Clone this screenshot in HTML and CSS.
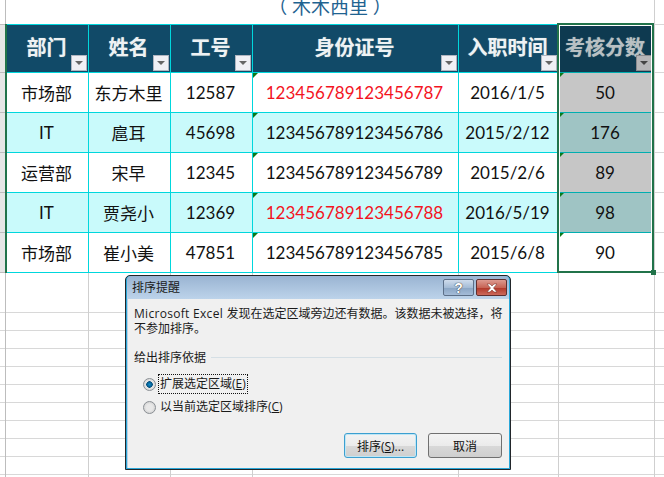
FILE: index.html
```html
<!DOCTYPE html>
<html lang="zh">
<head>
<meta charset="utf-8">
<title>排序提醒</title>
<link rel="stylesheet" href="styles.css">
</head>
<body>
<div class="sheet">
  <div class="gutter"></div>
  <div class="main">
    <div class="title">（ 木木西里 ）</div>
    <div class="table">
      <div class="cell head">部门<i class="drop"></i></div>
      <div class="cell head">姓名<i class="drop"></i></div>
      <div class="cell head">工号<i class="drop"></i></div>
      <div class="cell head">身份证号<i class="drop"></i></div>
      <div class="cell head">入职时间<i class="drop"></i></div>
      <div class="cell head sel">考核分数<i class="drop"></i></div>

      <div class="cell">市场部</div>
      <div class="cell">东方木里</div>
      <div class="cell">12587</div>
      <div class="cell tick red">123456789123456787</div>
      <div class="cell">2016/1/5</div>
      <div class="cell tick sel">50</div>

      <div class="cell alt">IT</div>
      <div class="cell alt">扈耳</div>
      <div class="cell alt">45698</div>
      <div class="cell alt tick">123456789123456786</div>
      <div class="cell alt">2015/2/12</div>
      <div class="cell alt tick sel">176</div>

      <div class="cell">运营部</div>
      <div class="cell">宋早</div>
      <div class="cell">12345</div>
      <div class="cell tick">123456789123456789</div>
      <div class="cell">2015/2/6</div>
      <div class="cell tick sel">89</div>

      <div class="cell alt">IT</div>
      <div class="cell alt">贾尧小</div>
      <div class="cell alt">12369</div>
      <div class="cell alt tick red">123456789123456788</div>
      <div class="cell alt">2016/5/19</div>
      <div class="cell alt tick sel">98</div>

      <div class="cell">市场部</div>
      <div class="cell">崔小美</div>
      <div class="cell">47851</div>
      <div class="cell tick">123456789123456785</div>
      <div class="cell">2015/6/8</div>
      <div class="cell tick last">90</div>
    </div>
  </div>
  <div class="right"></div>
  <div class="selection"><span class="handle"></span></div>

  <div class="dialog">
    <div class="titlebar">
      <span class="dlg-title">排序提醒</span>
      <span class="btn-help">?</span>
      <span class="btn-close">
        <svg width="16" height="10" viewBox="0 0 16 10"><path d="M3 1h3l2 2 2-2h3l-3.500 4 3.500 4h-3l-2-2-2 2h-3l3.500-4z" fill="#fff" stroke="#6b2a22" stroke-width=".5"/></svg>
      </span>
    </div>
    <div class="dlg-body">
      <p class="msg"><span class="latin">Microsoft Excel </span>发现在选定区域旁边还有数据。该数据未被选择，将不参加排序。</p>
      <div class="group"><span>给出排序依据</span><b class="rule"></b></div>
      <div class="radio-row first"><i class="radio on"></i><span class="focus">扩展选定区域(<u>E</u>)</span></div>
      <div class="radio-row"><i class="radio"></i><span class="plain">以当前选定区域排序(<u>C</u>)</span></div>
      <div class="actions">
        <button class="btn default">排序(<u>S</u>)...</button>
        <button class="btn">取消</button>
      </div>
    </div>
  </div>
</div>
</body>
</html>
```
FILE: styles.css
```css
html, body {
  margin: 0;
  padding: 0;
  background: #fff;
  overflow: hidden;
}
.sheet {
  position: relative;
  display: flex;
  width: 664px;
  height: 477px;
  overflow: hidden;
  font-family: Lato, "Noto Sans CJK SC", sans-serif;
  color: #111;
  background:
    linear-gradient(#fff, #fff) 0 0 / 100% 312px no-repeat,
    linear-gradient(#d8d8d8 1px, transparent 1px) 0 6px / 100% 18px;
  background-color: #fff;
}
.gutter {
  flex: none;
  width: 6px;
  background:
    linear-gradient(#21734a, #21734a) right 24px / 1px 249px no-repeat,
    linear-gradient(#bdbdbd, #bdbdbd) right 0 / 1px 100% no-repeat,
    repeating-linear-gradient(transparent 0 39px, #bdbdbd 39px 40px) 0 33px / 100% 240px no-repeat,
    linear-gradient(#bdbdbd, #bdbdbd) 0 24px / 100% 1px no-repeat,
    linear-gradient(#e6e6e6, #e6e6e6) 0 24px / 100% 249px no-repeat;
}
.main {
  flex: none;
  width: 648px;
  background:
    linear-gradient(#fff, #fff) 0 0 / 100% 24px no-repeat,
    linear-gradient(90deg, transparent 82px, #cfcfcf 82px, #cfcfcf 83px, transparent 83px) 0 0 / 100% 100% no-repeat,
    linear-gradient(90deg, transparent 164px, #cfcfcf 164px, #cfcfcf 165px, transparent 165px) 0 0 / 100% 100% no-repeat,
    linear-gradient(90deg, transparent 246px, #cfcfcf 246px, #cfcfcf 247px, transparent 247px) 0 0 / 100% 100% no-repeat,
    linear-gradient(90deg, transparent 452px, #cfcfcf 452px, #cfcfcf 453px, transparent 453px) 0 0 / 100% 100% no-repeat,
    linear-gradient(90deg, transparent 552px, #cfcfcf 552px, #cfcfcf 553px, transparent 553px) 0 0 / 100% 100% no-repeat;
  border-right: 1px solid #cfcfcf;
}
.right {
  flex: 1;
  background:
    repeating-linear-gradient(transparent 0 39px, #d8d8d8 39px 40px) 0 33px / 100% 240px no-repeat,
    linear-gradient(#d8d8d8, #d8d8d8) 0 24px / 100% 1px no-repeat;
}
.title {
  height: 24px;
  line-height: 14px;
  font-size: 19px;
  color: #1f6391;
  text-align: center;
  padding-left: 8px;
  box-sizing: border-box;
  overflow: hidden;
  width: 640px;
}
.table {
  display: grid;
  grid-template-columns: 82px 82px 82px 206px 100px 95px;
  grid-template-rows: 49px repeat(5, 40px);
  width: 648px;
  box-sizing: border-box;
  border-left: 1px solid #21734a;
  background: #fff;
  position: relative;
}
.cell {
  position: relative;
  display: flex;
  align-items: center;
  justify-content: center;
  box-sizing: border-box;
  padding-right: 2px;
  border-right: 1px solid #00d7dd;
  border-bottom: 1px solid #00d7dd;
  font-size: 17px;
  white-space: nowrap;
  background: #fff;
}
.cell.alt { background: #c9fafb; }
.red { color: #f3141f; }
.cell.head {
  background: #114a68;
  color: #eef2f4;
  font-size: 20px;
  font-weight: 700;
  border-top: 1px solid #00d7dd;
  text-shadow: 0 0 1px #8aa;
  padding-bottom: 4px;
}
.cell.sel { background: #c6c6c6; border-bottom-color: #00aeb0; }
.cell.alt.sel { background: #9fc4c4; }
.cell.head.sel {
  background: #0e3a50;
  color: #b9c0c3;
  border-top-color: transparent;
}
.tick::before {
  content: "";
  position: absolute;
  left: 0;
  top: 0;
  border-top: 5px solid #0a7a1a;
  border-right: 5px solid transparent;
}
.drop {
  position: absolute;
  right: 1px;
  bottom: 1px;
  width: 16px;
  height: 16px;
  box-sizing: border-box;
  background: #f0f0f5;
  border: 1px solid #b0b5c0;
}
.drop::after {
  content: "";
  position: absolute;
  left: 3px;
  top: 5px;
  border-top: 4px solid #666;
  border-left: 4px solid transparent;
  border-right: 4px solid transparent;
}
.head.sel .drop { background: #b6b6b8; border-color: #8a8a8e; }
.head.sel .drop::after { border-top-color: #444; }

.selection {
  position: absolute;
  left: 557px;
  top: 23px;
  width: 97px;
  height: 250px;
  box-sizing: border-box;
  border: 2px solid #21734a;
  box-shadow: inset 0 0 0 1px #fff;
}
.handle {
  position: absolute;
  right: -4px;
  bottom: -4px;
  width: 5px;
  height: 5px;
  background: #21734a;
}

.dialog {
  position: absolute;
  left: 125px;
  top: 275px;
  width: 386px;
  height: 195px;
  box-sizing: border-box;
  border: 1px solid #22262a;
  border-radius: 5px 5px 0 0;
  background: #2aa7d8;
  padding: 0 1px 1px;
  display: flex;
  flex-direction: column;
  font-family: "Open Sans", "Noto Sans CJK SC", sans-serif;
  font-size: 12px;
  color: #1a1a1a;
}
.titlebar {
  flex: none;
  height: 23px;
  display: flex;
  align-items: flex-start;
  padding: 0 2px 0 5px;
  background: linear-gradient(#9ab4d2, #bcd3ea);
  border-radius: 4px 4px 0 0;
}
.dlg-title {
  flex: 1;
  line-height: 24px;
  font-size: 12px;
}
.btn-help, .btn-close {
  height: 17px;
  box-sizing: border-box;
  margin-top: 3px;
  display: flex;
  align-items: center;
  justify-content: center;
  border-radius: 2px;
}
.btn-help {
  width: 31px;
  margin-right: 2px;
  font: 700 14px "Liberation Sans", sans-serif;
  color: #fff;
  text-shadow: 0 0 1px #333, 0 0 1px #333;
  background: linear-gradient(#cfdcec 0%, #a5bcd6 50%, #8aa5c4 52%, #a4bcd8 100%);
  border: 1px solid #5c6f88;
}
.btn-close {
  width: 31px;
  background: linear-gradient(#dd9a90 0%, #c76456 50%, #b23a2c 55%, #cc6a5c 100%);
  border: 1px solid #5f2f2f;
}
.dlg-body {
  flex: 1;
  min-height: 0;
  background: #f0f0f0;
  box-shadow: -1px 0 0 #b9d1e8;
  margin: 0 0 0 1px;
  padding: 7px 7px 0 6px;
  display: flex;
  flex-direction: column;
}
.msg {
  margin: 0;
  line-height: 15px;
  font-size: 12px;
  width: 372px;
}
.latin { letter-spacing: .3px; }
.group {
  display: flex;
  align-items: center;
  gap: 5px;
  margin-top: 13px;
  line-height: 17px;
}
.rule {
  flex: 1;
  height: 1px;
  background: #d5dfe5;
}
.radio-row {
  display: flex;
  align-items: center;
  gap: 3px;
  height: 18px;
  margin-left: 9px;
  line-height: 18px;
}
.radio-row.first { margin-top: 9px; margin-bottom: 5px; }
.radio {
  flex: none;
  width: 13px;
  height: 13px;
  box-sizing: border-box;
  border-radius: 50%;
  border: 1px solid #8a8f94;
  background: radial-gradient(circle, #e8e8e8 40%, #c5c5c5 100%);
}
.radio.on {
  background: radial-gradient(circle, #0d8fd0 0, #06507e 3px, #e6e6e6 3.500px, #cfcfcf 100%);
}
.focus {
  outline: 1px dotted #111;
  padding: 0 1px;
}
.plain { padding: 0 1px; }
.actions {
  display: flex;
  justify-content: flex-end;
  gap: 11px;
  margin-top: auto;
  padding-bottom: 10px;
}
.btn {
  width: 74px;
  height: 25px;
  padding: 0;
  font: 12px "Open Sans", "Noto Sans CJK SC", sans-serif;
  color: #111;
  border: 1px solid #707070;
  border-radius: 3px;
  background: linear-gradient(#f3f3f3 0%, #ebebeb 50%, #d8d8d8 52%, #cfcfcf 100%);
}
.btn.default {
  width: 73px;
  border-color: #3c9fd0;
  box-shadow: inset 0 0 0 1px #bfe6f5;
}
```
